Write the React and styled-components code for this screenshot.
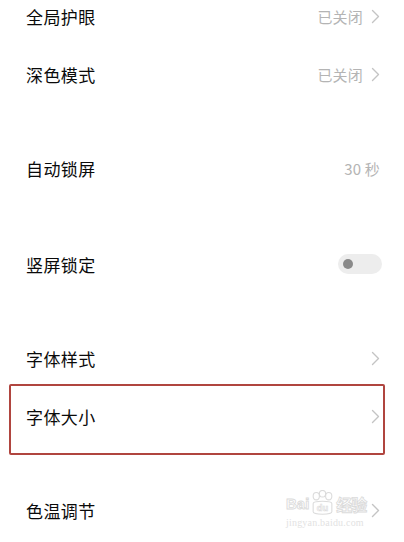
import React from "react";
import styled, { createGlobalStyle } from "styled-components";

const Global = createGlobalStyle`
  html, body {
    margin: 0;
    padding: 0;
    background: #fff;
    overflow: hidden;
  }
  body {
    font-family: "Noto Sans CJK SC", "Noto Sans", sans-serif;
  }
`;

const Page = styled.div`
  position: relative;
  width: 404px;
  height: 542px;
  overflow: hidden;
  background: #fff;
`;

const List = styled.div`
  display: flex;
  flex-direction: column;
  margin-top: -13px;
`;

const Section = styled.div`
  display: flex;
  flex-direction: column;
  margin-top: ${(p) => p.gap || 0}px;
`;

const Row = styled.div`
  position: relative;
  height: 58px;
  display: flex;
  align-items: center;
  justify-content: space-between;
  padding: 0 24px 0 26px;
`;

const Label = styled.span`
  font-size: 17px;
  color: #0a0a0a;
  letter-spacing: 0.4px;
`;

const Right = styled.div`
  display: flex;
  align-items: center;
  gap: 8px;
`;

const Value = styled.span`
  font-size: 15px;
  color: #b4b4b4;
  letter-spacing: 0.2px;
`;

const Toggle = styled.div`
  width: 44px;
  height: 20px;
  border-radius: 10px;
  background: #ededed;
  display: flex;
  align-items: center;
  padding-left: 5px;
  box-sizing: border-box;
  margin-right: -2px;
`;

const Knob = styled.div`
  width: 10px;
  height: 10px;
  border-radius: 50%;
  background: #8a8a8a;
`;

const Highlight = styled.div`
  position: absolute;
  left: 9px;
  right: 19px;
  top: -3px;
  bottom: -10px;
  border: 2px solid #b0453f;
  border-radius: 2px;
  pointer-events: none;
`;

const Watermark = styled.div`
  position: absolute;
  left: 286px;
  top: 490px;
  display: flex;
  flex-direction: column;
  align-items: flex-start;
  opacity: 0.6;
  pointer-events: none;
`;

const MarkTop = styled.div`
  display: flex;
  align-items: center;
  gap: 0;
  font-family: "Liberation Sans", sans-serif;
  font-size: 15px;
  font-weight: bold;
  color: #fff;
  -webkit-text-stroke: 0.9px #c4c4c4;
`;

const MarkCn = styled.span`
  font-family: "Noto Sans CJK SC", sans-serif;
  font-size: 16px;
  font-weight: bold;
  letter-spacing: -1px;
`;

const MarkUrl = styled.div`
  margin-top: 0;
  font-family: "Liberation Serif", serif;
  font-size: 10px;
  color: #cfcfcf;
  letter-spacing: 0.2px;
`;

const Chevron = () => (
  <svg width="9" height="15" viewBox="0 0 9 15" fill="none">
    <path d="M1.5 1.5 L7.5 7.5 L1.5 13.5" stroke="#c4c4c4" strokeWidth="1.4" strokeLinecap="round" strokeLinejoin="round" />
  </svg>
);

const Paw = () => (
  <svg width="27" height="27" viewBox="0 0 26 26" fill="none" stroke="#c4c4c4" strokeWidth="1">
    <ellipse cx="7" cy="6" rx="3" ry="3.5" />
    <ellipse cx="13" cy="3.6" rx="3" ry="3.2" />
    <ellipse cx="19" cy="6" rx="3" ry="3.5" />
    <path d="M4 13 C4 10 22 10 22 13 L22 21 C22 24 4 24 4 21 Z" />
    <text x="13" y="20.5" textAnchor="middle" fontSize="9" fontWeight="bold" fontFamily="Liberation Sans, sans-serif" fill="#fff" stroke="#c4c4c4" strokeWidth="0.6">du</text>
  </svg>
);

export default function App() {
  return (
    <Page>
      <Global />
      <List>
        <Section>
          <Row>
            <Label>全局护眼</Label>
            <Right>
              <Value>已关闭</Value>
              <Chevron />
            </Right>
          </Row>
          <Row>
            <Label>深色模式</Label>
            <Right>
              <Value>已关闭</Value>
              <Chevron />
            </Right>
          </Row>
        </Section>
        <Section gap={36}>
          <Row>
            <Label>自动锁屏</Label>
            <Right>
              <Value>30 秒</Value>
            </Right>
          </Row>
        </Section>
        <Section gap={38}>
          <Row>
            <Label>竖屏锁定</Label>
            <Toggle>
              <Knob />
            </Toggle>
          </Row>
        </Section>
        <Section gap={36}>
          <Row>
            <Label>字体样式</Label>
            <Chevron />
          </Row>
          <Row>
            <Label>字体大小</Label>
            <Chevron />
            <Highlight />
          </Row>
        </Section>
        <Section gap={36}>
          <Row>
            <Label>色温调节</Label>
            <Chevron />
          </Row>
        </Section>
      </List>
      <Watermark>
        <MarkTop>
          <span>Bai</span>
          <Paw />
          <MarkCn>经验</MarkCn>
        </MarkTop>
        <MarkUrl>jingyan.baidu.com</MarkUrl>
      </Watermark>
    </Page>
  );
}
